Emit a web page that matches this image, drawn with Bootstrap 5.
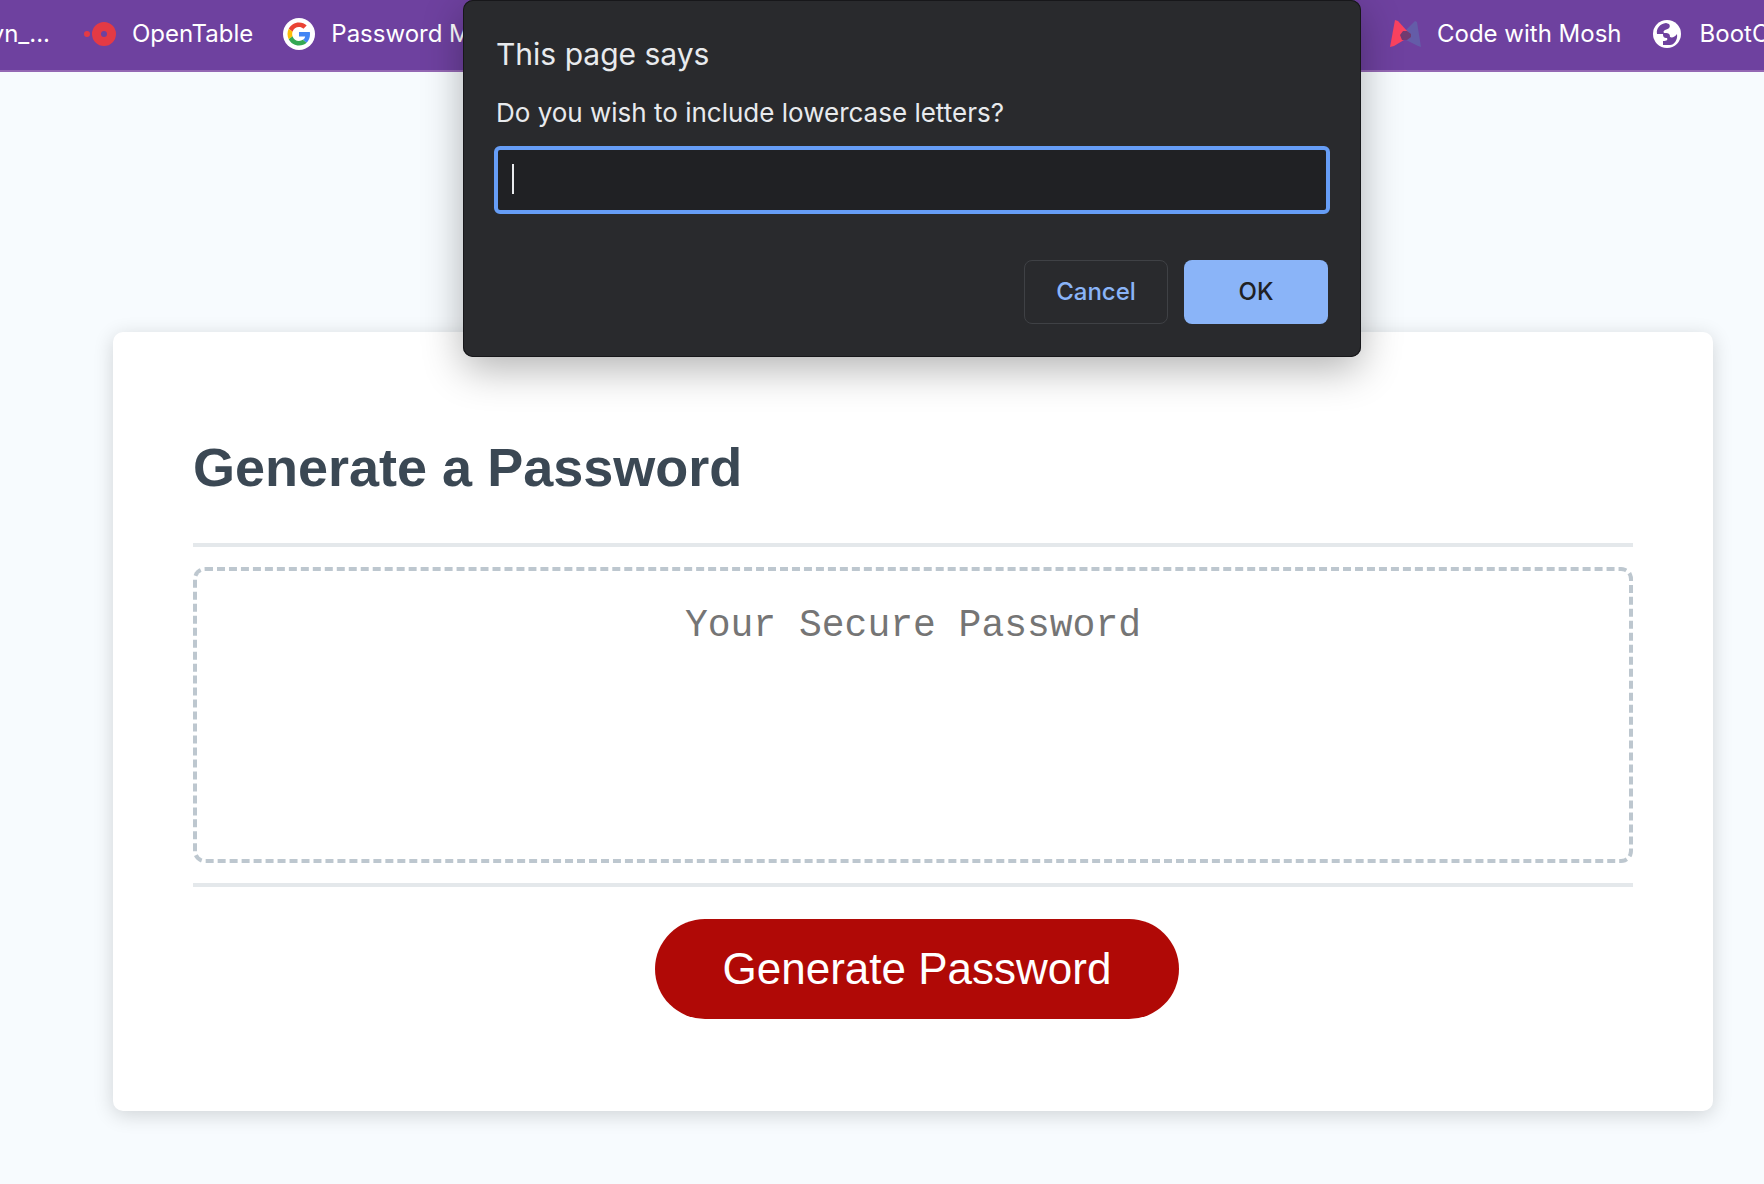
<!DOCTYPE html>
<html lang="en">
<head>
<meta charset="utf-8">
<meta name="viewport" content="width=device-width, initial-scale=1">
<title>Password Generator</title>
<link href="https://cdn.jsdelivr.net/npm/bootstrap@5.3.0/dist/css/bootstrap.min.css" rel="stylesheet">
<style>
  body { background: #f7fbfe; font-family: "Liberation Sans", Arial, sans-serif; min-height: 100vh; overflow-x: hidden; }

  /* Bookmarks bar */
  .bookmarks { background: #6e419f; border-bottom: 2px solid #9468b4; height: 72px; padding-bottom: 2px; font-family: Inter, sans-serif; font-size: 24px; line-height: 32px; }
  .bookmarks a { color: #fff; gap: 16px; white-space: nowrap; }
  .bookmarks svg { width: 32px; height: 32px; flex: none; }
  .marks-start, .marks-end { gap: 30px; }
  .marks-end { width: 375px; }
  .clipped { width: 54px; overflow: hidden; }

  /* Generator card */
  .stage { padding: 260px 51px 72px 113px; }
  .generator { border: 0; border-radius: 10px; padding: 100px 80px 92px; box-shadow: 0 4px 20px rgba(0, 0, 0, .16); }
  .generator h1 { color: #3b4854; font-size: 54px; line-height: 70px; margin: 0 0 41px; }
  .secret-wrap { border-top: 4px solid #e4e8eb; border-bottom: 4px solid #e4e8eb; padding: 20px 0; }
  .secret { display: block; height: 296px; border: 4px dashed #bdc7cf; border-radius: 12px; padding: 28px 20px; resize: none; text-align: center; font-family: "Liberation Mono", monospace; font-size: 38px; line-height: 54px; }
  .secret::placeholder { color: #757575; opacity: 1; }
  .actions { padding: 32px 0 0 8px; }
  .btn-generate, .btn-generate:hover { background: #b00906; color: #fff; border: 0; width: 524px; height: 100px; border-radius: 50px; font-size: 44px; line-height: 52px; }

  /* Browser prompt */
  .prompt-layer { position: absolute; inset: 0 0 auto 0; padding: 0 52px 0 112px; }
  .prompt-box { width: 898px; padding: 34px 31px 33px; background: #292a2d; color: #e8eaed; border: 0; border-radius: 10px; box-shadow: 0 0 0 1px #17171a inset, 0 12px 40px rgba(0, 0, 0, .3); font-family: Inter, sans-serif; }
  .prompt-box h2 { font-size: 30px; line-height: 40px; font-weight: 400; margin: 0 0 22px 2px; }
  .prompt-box label { font-size: 26px; line-height: 34px; margin: 0 0 16px 2px; }
  .prompt-field { position: relative; }
  .prompt-field input, .prompt-field input:focus { height: 68px; background: #202124; color: #e8eaed; border: 4px solid #669df6; border-radius: 6px; box-shadow: none; font-size: 24px; }
  .caret { position: absolute; left: 18px; top: 18px; width: 2px; height: 30px; background: #e8eaed; }
  .prompt-actions { gap: 16px; margin: 46px 2px 0; }
  .prompt-actions .btn { width: 144px; height: 64px; border-radius: 8px; font-size: 24px; font-weight: 500; }
  .btn-cancel { color: #8ab4f8; border: 1px solid #3f4145; }
  .btn-accept { background: #8ab4f8; color: #202124; border: 0; }
</style>
<script src="https://cdn.jsdelivr.net/npm/bootstrap@5.3.0/dist/js/bootstrap.bundle.min.js"></script>
</head>
<body>
<nav class="bookmarks d-flex align-items-center overflow-hidden" aria-label="Bookmarks">
  <div class="marks-start d-flex flex-fill">
    <a href="#" class="clipped d-flex justify-content-end text-decoration-none pe-1">yn_...</a>
    <a href="#" class="d-flex align-items-center text-decoration-none">
      <svg viewBox="0 0 32 32" aria-hidden="true"><circle cx="3" cy="16" r="3" fill="#e43a45"/><circle cx="20" cy="16" r="7.500" fill="none" stroke="#e43a45" stroke-width="9"/></svg>OpenTable</a>
    <a href="#" class="d-flex align-items-center text-decoration-none">
      <svg viewBox="0 0 32 32" aria-hidden="true"><circle cx="16" cy="16" r="16" fill="#fff"/><g transform="translate(4.500 4.500) scale(.479)"><path fill="#ea4335" d="M24 9.500c3.540 0 6.710 1.220 9.210 3.600l6.850-6.850C35.900 2.380 30.470 0 24 0 14.620 0 6.510 5.380 2.560 13.220l7.980 6.190C12.430 13.720 17.740 9.500 24 9.500z"/><path fill="#4285f4" d="M46.980 24.550c0-1.570-.150-3.090-.380-4.550H24v9.020h12.940c-.580 2.960-2.260 5.480-4.780 7.180l7.730 6c4.510-4.180 7.090-10.360 7.090-17.650z"/><path fill="#fbbc05" d="M10.530 28.590c-.480-1.450-.760-2.990-.760-4.590s.270-3.140.760-4.590l-7.980-6.190C.920 16.460 0 20.120 0 24s.920 7.540 2.560 10.780l7.970-6.190z"/><path fill="#34a853" d="M24 48c6.480 0 11.930-2.130 15.890-5.810l-7.730-6c-2.150 1.450-4.920 2.300-8.160 2.300-6.260 0-11.570-4.220-13.470-9.910l-7.980 6.190C6.510 42.620 14.620 48 24 48z"/></g></svg>Password Manager</a>
  </div>
  <div class="marks-end d-flex flex-shrink-0">
    <a href="#" class="d-flex align-items-center text-decoration-none">
      <svg viewBox="0 0 32 32" aria-hidden="true"><path fill="#645ca8" d="M26 3l2 1 4 25-3-1-12-6-1-9z"/><path fill="#fb4260" d="M6 2l3 1 10 11-4 8-10 6-4 1z"/><path fill="#713a70" d="M11 17l3-4h4l4 3v3l-4 3h-5z"/></svg>Code with Mosh</a>
    <a href="#" class="d-flex align-items-center text-decoration-none">
      <svg viewBox="0 0 32 32" aria-hidden="true"><circle cx="15" cy="16" r="14" fill="#fff"/><path fill="#6e419f" d="M5 16C4 10 8 6 14 5l3 1c2 3 0 5-4 6-2 1-2 3 0 3 4 0 5 1 5 4 2 1 5 0 7-3 1 6-3 11-7 11h-7v-4c4 0 5-1 4-3-3 0-4-1-4-4z"/></svg>BootCamp</a>
  </div>
</nav>

<main class="stage">
  <section class="generator card">
    <h1 class="fw-bold">Generate a Password</h1>
    <div class="secret-wrap">
      <textarea class="secret form-control" placeholder="Your Secure Password" aria-label="Your Secure Password" readonly></textarea>
    </div>
    <div class="actions d-flex justify-content-center">
      <button type="button" class="btn btn-generate">Generate Password</button>
    </div>
  </section>
</main>

<div class="prompt-layer d-flex justify-content-center">
  <form class="prompt-box" role="dialog" aria-labelledby="prompt-title">
    <h2 id="prompt-title">This page says</h2>
    <label for="answer" class="d-block">Do you wish to include lowercase letters?</label>
    <div class="prompt-field">
      <input type="text" id="answer" class="form-control" autocomplete="off">
      <span class="caret"></span>
    </div>
    <div class="prompt-actions d-flex justify-content-end">
      <button type="button" class="btn btn-cancel">Cancel</button>
      <button type="button" class="btn btn-accept">OK</button>
    </div>
  </form>
</div>
</body>
</html>
